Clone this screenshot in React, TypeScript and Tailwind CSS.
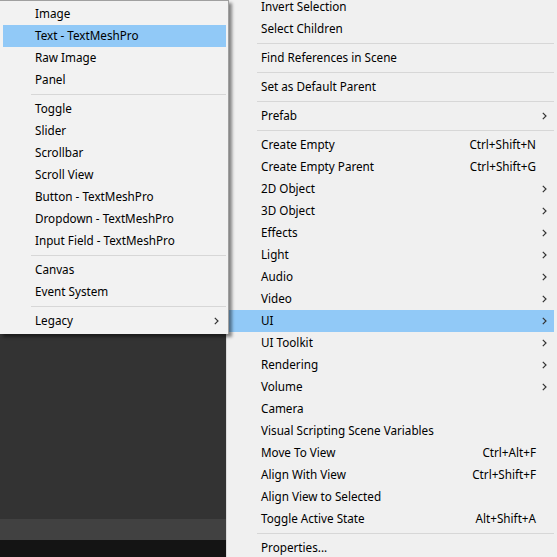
import type { ReactNode } from "react";

type Entry =
  | { type: "item"; label: string; shortcut?: string; sub?: boolean; active?: boolean }
  | { type: "sep" };

const leftEntries: Entry[] = [
  { type: "item", label: "Image" },
  { type: "item", label: "Text - TextMeshPro", active: true },
  { type: "item", label: "Raw Image" },
  { type: "item", label: "Panel" },
  { type: "sep" },
  { type: "item", label: "Toggle" },
  { type: "item", label: "Slider" },
  { type: "item", label: "Scrollbar" },
  { type: "item", label: "Scroll View" },
  { type: "item", label: "Button - TextMeshPro" },
  { type: "item", label: "Dropdown - TextMeshPro" },
  { type: "item", label: "Input Field - TextMeshPro" },
  { type: "sep" },
  { type: "item", label: "Canvas" },
  { type: "item", label: "Event System" },
  { type: "sep" },
  { type: "item", label: "Legacy", sub: true }
];

const rightEntries: Entry[] = [
  { type: "item", label: "Invert Selection" },
  { type: "item", label: "Select Children" },
  { type: "sep" },
  { type: "item", label: "Find References in Scene" },
  { type: "sep" },
  { type: "item", label: "Set as Default Parent" },
  { type: "sep" },
  { type: "item", label: "Prefab", sub: true },
  { type: "sep" },
  { type: "item", label: "Create Empty", shortcut: "Ctrl+Shift+N" },
  { type: "item", label: "Create Empty Parent", shortcut: "Ctrl+Shift+G" },
  { type: "item", label: "2D Object", sub: true },
  { type: "item", label: "3D Object", sub: true },
  { type: "item", label: "Effects", sub: true },
  { type: "item", label: "Light", sub: true },
  { type: "item", label: "Audio", sub: true },
  { type: "item", label: "Video", sub: true },
  { type: "item", label: "UI", sub: true, active: true },
  { type: "item", label: "UI Toolkit", sub: true },
  { type: "item", label: "Rendering", sub: true },
  { type: "item", label: "Volume", sub: true },
  { type: "item", label: "Camera" },
  { type: "item", label: "Visual Scripting Scene Variables" },
  { type: "item", label: "Move To View", shortcut: "Ctrl+Alt+F" },
  { type: "item", label: "Align With View", shortcut: "Ctrl+Shift+F" },
  { type: "item", label: "Align View to Selected" },
  { type: "item", label: "Toggle Active State", shortcut: "Alt+Shift+A" },
  { type: "sep" },
  { type: "item", label: "Properties..." }
];

const Chevron = () => (
  <svg width="5" height="8" viewBox="0 0 5 8" className="text-[#333]">
    <path d="M0.8 0.8 L4 4 L0.8 7.2" fill="none" stroke="currentColor" strokeWidth="1.2" />
  </svg>
);

const MenuList = ({ entries, textPad, sepPad }: { entries: Entry[]; textPad: string; sepPad: string }) => (
  <>
    {entries.map((entry, i): ReactNode => {
      if (entry.type === "sep") {
        return (
          <div key={i} className={`flex h-[7px] items-center ${sepPad}`}>
            <div className="h-px w-full bg-[#d7d7d7]" />
          </div>
        );
      }
      return (
        <div
          key={i}
          className={`flex h-[22px] items-center ${textPad} ${entry.active ? "bg-[#91c9f7]" : ""}`}
        >
          <span className="flex-1 whitespace-nowrap">{entry.label}</span>
          {entry.shortcut ? <span className="whitespace-nowrap pr-[18px]">{entry.shortcut}</span> : null}
          {entry.sub ? (
            <span className="flex w-[18px] justify-center pr-[2px]">
              <Chevron />
            </span>
          ) : null}
        </div>
      );
    })}
  </>
);

export default function App() {
  return (
    <div
      className="flex h-[557px] w-[557px] overflow-hidden bg-[#333333] text-[11.7px] text-black"
      style={{ fontFamily: '"Segoe UI", "Noto Sans", sans-serif' }}
    >
      <div className="flex w-[226px] shrink-0 flex-col">
        <div className="relative z-10 w-[229px] border-r border-t border-[#a0a0a0] bg-[#f2f2f2] pb-[2px] pl-[3px] pr-[2px] pt-[2px] shadow-[3px_3px_3px_rgba(0,0,0,0.45)]">
          <MenuList entries={leftEntries} textPad="pl-[32px]" sepPad="pl-[28px]" />
        </div>
        <div className="flex-1" />
        <div className="h-[21px] bg-[#414141]" />
        <div className="h-[17px] bg-[#141414]" />
      </div>
      <div className="flex-1 border-l border-[#dadada] bg-[#f0f0f0] pr-[3px]">
        <div className="-mt-[4px]">
          <MenuList entries={rightEntries} textPad="pl-[34px]" sepPad="pl-[30px]" />
        </div>
      </div>
    </div>
  );
}
